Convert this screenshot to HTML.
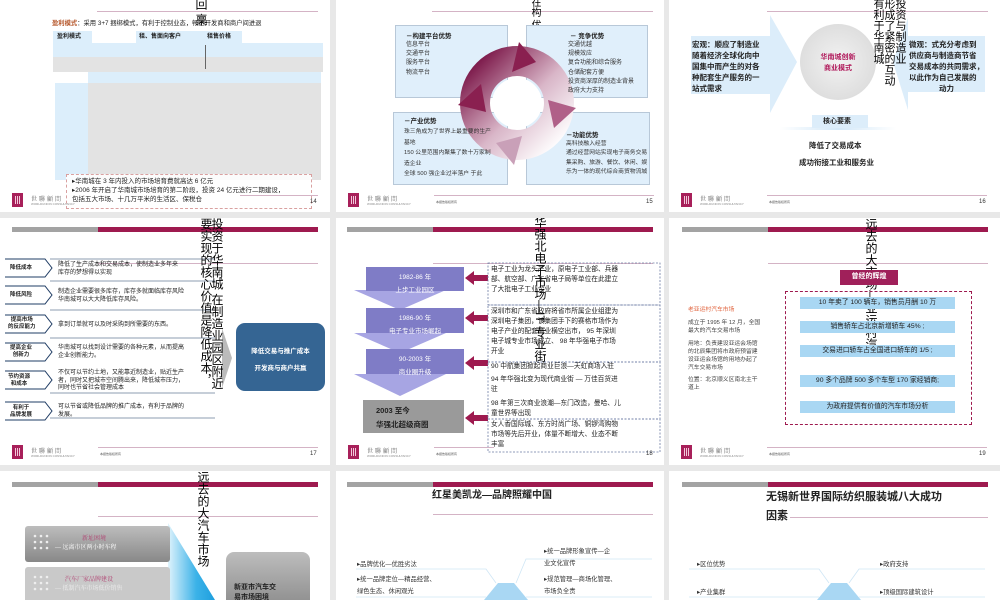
<!DOCTYPE html>
<html><head><meta charset="utf-8">
<style>
*{margin:0;padding:0;box-sizing:border-box}
body{width:1000px;height:600px;overflow:hidden;background:#e8e8e8;position:relative;font-family:"Liberation Sans","Noto Sans CJK SC",sans-serif;color:#222}
.c{position:absolute;background:#fff;overflow:hidden}
.c div,.c span,.c svg{position:absolute}
.gb{height:5px;background:#a3a3a3}
.mb{height:5px;background:#9e1a4f}
.tl{height:1px;background:#d4b3c5}
.ft{left:0;width:330px;height:20px}
.ft .lg{left:12px;top:-2px;width:11px;height:14px;background:#a8205a}
.ft .lg i{position:absolute;top:3px;width:1px;height:8px;background:#f3c9db}
.ft .nm{left:31px;top:-1px;font-size:6px;color:#666;letter-spacing:2px;font-family:"Liberation Serif","Noto Serif CJK SC",serif}
.ft .sb{left:31px;top:7px;font-size:3px;color:#888;white-space:nowrap}
.ft .ln{left:98px;top:0;width:220px;height:1px;background:#d4b3c5}
.ft .cp{left:100px;top:5px;font-size:3px;color:#555;white-space:nowrap}
.ft .pg{left:310px;top:4px;font-size:6px;color:#333}
.vt{writing-mode:vertical-rl;font-size:13px;line-height:11px;color:#000;white-space:nowrap}
.t6{font-size:6px;line-height:9px;white-space:nowrap}
.t7{font-size:7px;line-height:10px;white-space:nowrap}
.bx{background:#e0effb;border:1px solid #b8c8d8}
</style></head><body>

<!-- Slide 14 -->
<div class="c" style="left:0;top:0;width:330px;height:212px">
  <div class="tl" style="left:97px;top:11px;width:221px"></div>
  <div class="vt" style="left:195px;top:-2px;font-size:12px">回 稟</div>
  <div class="t6" style="left:52px;top:19px;font-size:6.3px"><b style="color:#b5562a">盈利模式</b>：采用 3+7 捆绑模式，有利于控制业态，畅达开发商和商户间进退</div>
  <div style="left:53px;top:31px;width:39px;height:12px;background:#dceefb"></div>
  <div style="left:136px;top:31px;width:106px;height:12px;background:#dceefb"></div>
  <div class="t6" style="left:57px;top:33px;font-weight:bold">盈利模式</div>
  <div class="t6" style="left:139px;top:33px;font-weight:bold">租、售面向客户</div>
  <div class="t6" style="left:207px;top:33px;font-weight:bold">租售价格</div>
  <div style="left:53px;top:43px;width:270px;height:14px;background:#dceefb"></div>
  <div style="left:53px;top:57px;width:270px;height:15px;background:#e3e3e3"></div>
  <div style="left:88px;top:72px;width:233px;height:11px;background:#dceefb"></div>
  <div style="left:55px;top:83px;width:33px;height:97px;background:#dceefb"></div>
  <div style="left:88px;top:83px;width:233px;height:97px;background:#e3e3e3"></div>
  <div style="left:205px;top:45px;width:1px;height:24px;background:#666"></div>
  <div style="left:66px;top:174px;width:246px;height:35px;border:1px dashed #d9a0a0;background:rgba(255,255,255,.85)"></div>
  <div class="t6" style="left:72px;top:177px;font-size:6.5px">▸华南城在 3 年内投入的市场培育费就高达 6 亿元</div>
  <div class="t6" style="left:72px;top:186px;font-size:6.5px">▸2006 年开启了华南城市场培育的第二阶段，投资 24 亿元进行二期建设，</div>
  <div class="t6" style="left:72px;top:195px;font-size:6.5px">包括五大市场、十几万平米的生活区、保税仓</div>
  <div class="ft" style="top:195px"><div class="lg"><i style="left:3px"></i><i style="left:5px"></i><i style="left:7px"></i></div><div class="nm">世聯顧問</div><div class="sb">WORLDUNION CONSULTANCY</div><div class="ln" style="left:240px;width:78px"></div><div class="pg">14</div></div>
</div>

<!-- Slide 15 -->
<div class="c" style="left:336px;top:0;width:328px;height:212px">
  <div class="tl" style="left:96px;top:11px;width:221px"></div>
  <div class="vt" style="left:194px;top:-3px;font-size:10px;line-height:9px">在构 优势</div>
  <div class="bx" style="left:59px;top:25px;width:113px;height:73px"></div>
  <div class="bx" style="left:190px;top:25px;width:122px;height:73px"></div>
  <div class="bx" style="left:57px;top:112px;width:115px;height:73px"></div>
  <div class="bx" style="left:190px;top:112px;width:124px;height:73px"></div>
  <svg width="328" height="212" style="left:0;top:0">
    <defs><linearGradient id="g1" x1="0" y1="0" x2="1" y2="1"><stop offset="0" stop-color="#7a1547"/><stop offset=".55" stop-color="#d9b6c8"/><stop offset="1" stop-color="#ffffff"/></linearGradient></defs>
    <circle cx="181" cy="103" r="42" fill="none" stroke="url(#g1)" stroke-width="30"/>
    <polygon points="183,42 200,62 176,72" fill="#8a2050"/>
    <polygon points="240,108 218,128 212,100" fill="#b06088"/>
    <polygon points="178,165 160,143 186,136" fill="#c9a0b8"/>
    <polygon points="122,105 145,84 150,112" fill="#8a2050"/>
    <circle cx="181" cy="103" r="25" fill="#fff"/>
  </svg>
  <div class="t6" style="left:70px;top:32px;font-weight:bold;font-size:6.5px">－构建平台优势</div>
  <div class="t6" style="left:70px;top:41px;line-height:9.2px;color:#333">信息平台<br>交通平台<br>服务平台<br>物流平台</div>
  <div class="t6" style="left:234px;top:32px;font-weight:bold;font-size:6.5px">－ 竞争优势</div>
  <div class="t6" style="left:232px;top:41px;line-height:9.2px;color:#333">交通优越<br>规模效应<br>复合功能和综合服务<br>仓储配套方便<br>投资商深厚的制造业背景<br>政府大力支持</div>
  <div class="t6" style="left:68px;top:117px;font-weight:bold;font-size:6.5px">－产业优势</div>
  <div class="t6" style="left:68px;top:127px;line-height:10.5px;color:#333;font-size:5.8px">珠三角成为了世界上最重要的生产<br>基地<br>150 公里范围内聚集了数十万家制<br>造企业<br>全球 500 强企业过半落户 于此</div>
  <div class="t6" style="left:230px;top:131px;font-weight:bold;font-size:6.5px">－功能优势</div>
  <div class="t6" style="left:230px;top:140px;line-height:9.3px;color:#333;font-size:5.8px">高科技融入经营<br>通过经营网站实现电子商务交易<br>集采购、旅游、餐饮、休闲、娱<br>乐为一体的现代综合商贸物流城</div>
  <div class="ft" style="top:195px"><div class="lg"><i style="left:3px"></i><i style="left:5px"></i><i style="left:7px"></i></div><div class="nm">世聯顧問</div><div class="sb">WORLDUNION CONSULTANCY</div><div class="ln"></div><div class="cp">本报告版权所有</div><div class="pg">15</div></div>
</div>

<!-- Slide 16 -->
<div class="c" style="left:669px;top:0;width:331px;height:212px">
  <div class="tl" style="left:98px;top:11px;width:221px"></div>
  <svg width="331" height="212" style="left:0;top:0">
    <polygon points="22,36 101,36 101,15 128,62 101,113 101,94 22,94" fill="#dcedfa"/>
    <polygon points="316,36 239,36 239,18 224,62 239,110 239,92 316,92" fill="#dcedfa"/>
    <defs><radialGradient id="g2"><stop offset="0" stop-color="#f2f2f2"/><stop offset="1" stop-color="#dedede"/></radialGradient>
    <linearGradient id="g3" x1="0" x2="1"><stop offset="0" stop-color="#fff"/><stop offset=".5" stop-color="#d3e8f8"/><stop offset="1" stop-color="#fff"/></linearGradient></defs>
    <circle cx="169" cy="62" r="38" fill="url(#g2)"/>
    <rect x="111" y="127" width="116" height="3" fill="url(#g3)"/>
  </svg>
  <div class="t7" style="left:23px;top:39px;font-weight:bold;font-size:7.5px;line-height:11px">宏观：顺应了制造业<br>随着经济全球化向中<br>国集中而产生的对各<br>种配套生产服务的一<br>站式需求</div>
  <div class="t7" style="left:140px;top:52px;font-weight:bold;color:#b0185a;text-align:center;width:58px;line-height:11px">华南城创新<br>商业模式</div>
  <div class="vt" style="left:203px;top:-2px;font-size:11px;line-height:11px">投资与制造业<br>形成了紧密的互动<br>有利于华南城</div>
  <div class="t7" style="left:240px;top:39px;font-weight:bold;font-size:7.5px;line-height:11px">微观：式充分考虑到<br>供应商与制造商节省<br>交易成本的共同需求，<br>以此作为自己发展的<br><span style="position:static;padding-left:30px">动力</span></div>
  <div style="left:143px;top:115px;width:56px;height:13px;background:#dcedfa"></div>
  <div class="t7" style="left:154px;top:117px;font-weight:bold">核心要素</div>
  <div class="t7" style="left:140px;top:141px;font-weight:bold;font-size:7.5px">降低了交易成本</div>
  <div class="t7" style="left:130px;top:158px;font-weight:bold;font-size:7.5px">成功衔接工业和服务业</div>
  <div class="ft" style="top:195px"><div class="lg"><i style="left:3px"></i><i style="left:5px"></i><i style="left:7px"></i></div><div class="nm">世聯顧問</div><div class="sb">WORLDUNION CONSULTANCY</div><div class="ln"></div><div class="cp">本报告版权所有</div><div class="pg">16</div></div>
</div>

<!-- Slide 17 -->
<div class="c" style="left:0;top:218px;width:330px;height:247px">
  <div class="gb" style="left:12px;top:9px;width:86px"></div><div class="mb" style="left:98px;top:9px;width:220px"></div>
  <div class="tl" style="left:98px;top:45px;width:220px"></div>
  <svg width="330" height="247" style="left:0;top:0" fill="none" stroke="#1f3c64" stroke-width="1">
    <path d="M5 41 H45 L52 50 L45 59 H5"/><path d="M50 41 H215" stroke-width=".6"/>
    <path d="M5 68 H45 L52 77 L45 86 H5"/><path d="M50 63 H215" stroke-width=".6"/>
    <path d="M5 97 H45 L52 106 L45 115 H5"/><path d="M50 92 H215" stroke-width=".6"/>
    <path d="M5 125 H45 L52 134 L45 143 H5"/><path d="M50 120 H215" stroke-width=".6"/>
    <path d="M5 153 H45 L52 162 L45 171 H5"/><path d="M50 175 H215" stroke-width=".6"/>
    <path d="M5 184 H45 L52 193 L45 202 H5"/><path d="M50 200 H215" stroke-width=".6"/>
    <path d="M222 110 L232 140 L222 170 Z" fill="#bbb" stroke="none"/>
  </svg>
  <div class="t6" style="left:10px;top:46px;font-weight:bold;font-size:5.5px">降低成本</div>
  <div class="t6" style="left:10px;top:73px;font-weight:bold;font-size:5.5px">降低风险</div>
  <div class="t6" style="left:8px;top:99px;font-weight:bold;font-size:5.5px;line-height:7px;text-align:center">提高市场<br>的反应能力</div>
  <div class="t6" style="left:10px;top:127px;font-weight:bold;font-size:5.5px;line-height:7px;text-align:center">提高企业<br>创新力</div>
  <div class="t6" style="left:8px;top:156px;font-weight:bold;font-size:5.5px;line-height:7px;text-align:center">节约资源<br>和成本</div>
  <div class="t6" style="left:10px;top:187px;font-weight:bold;font-size:5.5px;line-height:7px;text-align:center">有利于<br>品牌发展</div>
  <div class="t6" style="left:58px;top:44px;font-size:6px;line-height:7.5px">降低了生产成本和交易成本，使制造业多年来<br>库存的梦想得以实现</div>
  <div class="t6" style="left:58px;top:71px;font-size:6px;line-height:7.5px">制造企业需要很多库存，库存多就面临库存风险<br>华南城可以大大降低库存风险。</div>
  <div class="t6" style="left:58px;top:103px;font-size:6px">拿到订单就可以及时采购到所需要的东西。</div>
  <div class="t6" style="left:58px;top:127px;font-size:6px;line-height:7.5px">华南城可以找到设计需要的各种元素，从而提高<br>企业创新能力。</div>
  <div class="t6" style="left:58px;top:152px;font-size:6px;line-height:7.5px">不仅可以节约土地，又能靠近制造业，贴近生产<br>者，同时又把城市空间腾出来，降低城市压力，<br>同时也节省社会管理成本</div>
  <div class="t6" style="left:58px;top:186px;font-size:6px;line-height:7.5px">可以节省或降低品牌的推广成本，有利于品牌的<br>发展。</div>
  <div class="vt" style="left:200px;top:0px;font-size:12px;line-height:11px">投资于华南城 在制造业园区附近<br>要实现的核心价值是降低成本，</div>
  <div style="left:236px;top:105px;width:89px;height:68px;background:#356593;border-radius:9px"></div>
  <div class="t7" style="left:236px;top:129px;width:89px;text-align:center;color:#fff;font-weight:bold;font-size:6.5px">降低交易与推广成本</div>
  <div class="t7" style="left:236px;top:146px;width:89px;text-align:center;color:#fff;font-weight:bold;font-size:6.5px">开发商与商户共赢</div>
  <div class="ft" style="top:229px"><div class="lg"><i style="left:3px"></i><i style="left:5px"></i><i style="left:7px"></i></div><div class="nm">世聯顧問</div><div class="sb">WORLDUNION CONSULTANCY</div><div class="ln"></div><div class="cp">本报告版权所有</div><div class="pg">17</div></div>
</div>

<!-- Slide 18 -->
<div class="c" style="left:336px;top:218px;width:328px;height:247px">
  <div class="gb" style="left:11px;top:9px;width:86px"></div><div class="mb" style="left:97px;top:9px;width:220px"></div>
  <div class="tl" style="left:97px;top:45px;width:220px"></div>
  <svg width="328" height="247" style="left:0;top:0">
    <polygon points="18,72 110,72 64,92" fill="#a7a5e3"/>
    <polygon points="18,115 110,115 64,135" fill="#a7a5e3"/>
    <polygon points="18,156 110,156 64,178" fill="#a7a5e3"/>
    <rect x="30" y="49" width="98" height="24" fill="#7f7cc6"/>
    <rect x="30" y="90" width="98" height="25" fill="#7f7cc6"/>
    <rect x="30" y="131" width="98" height="25" fill="#7f7cc6"/>
    <rect x="27" y="182" width="101" height="33" fill="#9a9a9a"/>
    <g fill="#9e1a4f">
      <polygon points="129,60 138,53 138,57 152,57 152,63 138,63 138,67"/>
      <polygon points="129,100 138,93 138,97 152,97 152,103 138,103 138,107"/>
      <polygon points="129,145 138,138 138,142 152,142 152,148 138,148 138,152"/>
      <polygon points="129,200 138,193 138,197 152,197 152,203 138,203 138,207"/>
    </g>
    <g fill="none" stroke="#6b7ba3" stroke-dasharray="2,1.5" stroke-width=".8">
      <rect x="152" y="45" width="172" height="42"/>
      <rect x="152" y="87" width="172" height="57"/>
      <rect x="152" y="144" width="172" height="57"/>
      <rect x="152" y="201" width="172" height="33"/>
    </g>
  </svg>
  <div class="t7" style="left:30px;top:53px;width:98px;text-align:center;color:#fff;font-size:6.5px;line-height:13px">1982-86 年<br>上步工业园区</div>
  <div class="t7" style="left:30px;top:94px;width:98px;text-align:center;color:#fff;font-size:6.5px;line-height:13px">1986-90 年<br>电子专业市场崛起</div>
  <div class="t7" style="left:30px;top:135px;width:98px;text-align:center;color:#fff;font-size:6.5px;line-height:13px">90-2003 年<br>商业圈升级</div>
  <div class="t7" style="left:40px;top:186px;font-weight:bold;font-size:7.5px;line-height:14px">2003 至今<br>华强北超级商圈</div>
  <div class="t7" style="left:155px;top:47px;font-size:6.7px;line-height:10px">电子工业为龙头产业，原电子工业部、兵器<br>部、航空部、广东省电子局等单位在此建立<br>了大批电子工业企业</div>
  <div class="t7" style="left:155px;top:89px;font-size:6.7px;line-height:10px">深圳市和广东省政府将省市所属企业组建为<br>深圳电子集团，该集团手下的赛格市场作为<br>电子产业的配套商业横空出市， 95 年深圳<br>电子城专业市场成立、 98 年华强电子市场<br>开业</div>
  <div class="t7" style="left:155px;top:144px;font-size:6.7px;line-height:10px">90 中航集团掀起商业巨浪—天虹商场入驻</div>
  <div class="t7" style="left:155px;top:157px;font-size:6.7px;line-height:10px">94 年华强北变为现代商业街 — 万佳百货进<br>驻</div>
  <div class="t7" style="left:155px;top:181px;font-size:6.7px;line-height:10px">98 年第三次商业浪潮—东门改造，曼哈、儿<br>童世界等出现</div>
  <div class="t7" style="left:155px;top:202px;font-size:6.7px;line-height:10px">女人香国际城、东方时尚广场、铜锣湾购物<br>市场等先后开业，体量不断增大、业态不断<br>丰富</div>
  <div class="vt" style="left:198px;top:-2px;font-size:12px">华强北电子市场—IT 专业街</div>
  <div class="ft" style="top:229px"><div class="lg"><i style="left:3px"></i><i style="left:5px"></i><i style="left:7px"></i></div><div class="nm">世聯顧問</div><div class="sb">WORLDUNION CONSULTANCY</div><div class="ln" style="width:60px"></div><div class="cp">本报告版权所有</div><div class="pg">18</div></div>
</div>

<!-- Slide 19 -->
<div class="c" style="left:669px;top:218px;width:331px;height:247px">
  <div class="gb" style="left:13px;top:9px;width:86px"></div><div class="mb" style="left:99px;top:9px;width:220px"></div>
  <div class="tl" style="left:99px;top:45px;width:220px"></div>
  <div class="vt" style="left:196px;top:0px;font-size:12px">远去的大市场—亚运村汽</div>
  <div style="left:171px;top:52px;width:58px;height:15px;background:#a0205a"></div>
  <div class="t7" style="left:171px;top:54px;width:58px;text-align:center;color:#fff;font-weight:bold">曾经的辉煌</div>
  <div style="left:116px;top:73px;width:187px;height:134px;border:1px dashed #9e1a4f"></div>
  <div style="left:131px;top:79px;width:155px;height:12px;background:#a9d7f3"></div>
  <div style="left:131px;top:103px;width:155px;height:12px;background:#a9d7f3"></div>
  <div style="left:131px;top:127px;width:155px;height:12px;background:#a9d7f3"></div>
  <div style="left:131px;top:157px;width:155px;height:12px;background:#a9d7f3"></div>
  <div style="left:131px;top:183px;width:155px;height:12px;background:#a9d7f3"></div>
  <div class="t7" style="left:131px;top:80px;width:155px;text-align:center;font-size:6.8px">10 年卖了 100 辆车，销售员月酬 10 万</div>
  <div class="t7" style="left:131px;top:104px;width:155px;text-align:center;font-size:6.8px">销售轿车占北京新增轿车 45% ;</div>
  <div class="t7" style="left:131px;top:128px;width:155px;text-align:center;font-size:6.8px">交易进口轿车占全国进口轿车的 1/5 ;</div>
  <div class="t7" style="left:131px;top:158px;width:155px;text-align:center;font-size:6.8px">90 多个品牌 500 多个车型 170 家经销商;</div>
  <div class="t7" style="left:131px;top:184px;width:155px;text-align:center;font-size:6.8px">为政府提供有价值的汽车市场分析</div>
  <div class="t6" style="left:19px;top:88px;color:#e0603a;font-size:5.8px">老亚运村汽车市场</div>
  <div class="t6" style="left:19px;top:101px;color:#444;font-size:5.8px;line-height:8px">成立于 1995 年 12 月，全国<br>最大的汽车交易市场</div>
  <div class="t6" style="left:19px;top:122px;color:#444;font-size:5.8px;line-height:8px">用地：负责建设亚运会场馆<br>的北辰集团将市政府预留建<br>设亚运会场馆的用地办起了<br>汽车交易市场</div>
  <div class="t6" style="left:19px;top:158px;color:#444;font-size:5.8px;line-height:8px">位置：北京顺义区南北主干<br>道上</div>
  <div class="ft" style="top:229px"><div class="lg"><i style="left:3px"></i><i style="left:5px"></i><i style="left:7px"></i></div><div class="nm">世聯顧問</div><div class="sb">WORLDUNION CONSULTANCY</div><div class="ln"></div><div class="cp">本报告版权所有</div><div class="pg">19</div></div>
</div>

<!-- Slide 20 -->
<div class="c" style="left:0;top:471px;width:330px;height:129px">
  <div class="gb" style="left:12px;top:11px;width:86px"></div><div class="mb" style="left:98px;top:11px;width:220px"></div>
  <div class="tl" style="left:98px;top:45px;width:220px"></div>
  <svg width="330" height="129" style="left:0;top:0">
    <defs><linearGradient id="g4" x1="0" x2="1"><stop offset="0" stop-color="#dff3fc"/><stop offset=".6" stop-color="#3bb2e8"/><stop offset="1" stop-color="#1e9fde"/></linearGradient>
    <linearGradient id="g5" x1="0" y1="0" x2="0" y2="1"><stop offset="0" stop-color="#bdbdbd"/><stop offset="1" stop-color="#888"/></linearGradient></defs>
    <polygon points="168,52 215,129 168,129" fill="url(#g4)"/>
    <rect x="25" y="55" width="145" height="36" rx="3" fill="url(#g5)"/>
    <rect x="25" y="96" width="145" height="40" rx="3" fill="#c9c9c9"/>
    <rect x="226" y="81" width="84" height="60" rx="8" fill="url(#g5)"/>
    <g fill="#eee"><circle cx="35" cy="65" r="1.3"/><circle cx="41" cy="65" r="1.3"/><circle cx="47" cy="65" r="1.3"/><circle cx="35" cy="71" r="1.3"/><circle cx="41" cy="71" r="1.3"/><circle cx="47" cy="71" r="1.3"/><circle cx="35" cy="77" r="1.3"/><circle cx="41" cy="77" r="1.3"/><circle cx="47" cy="77" r="1.3"/>
    <circle cx="35" cy="106" r="1.3"/><circle cx="41" cy="106" r="1.3"/><circle cx="47" cy="106" r="1.3"/><circle cx="35" cy="112" r="1.3"/><circle cx="41" cy="112" r="1.3"/><circle cx="47" cy="112" r="1.3"/><circle cx="35" cy="118" r="1.3"/><circle cx="41" cy="118" r="1.3"/><circle cx="47" cy="118" r="1.3"/></g>
  </svg>
  <div class="t6" style="left:82px;top:64px;color:#b04070;font-family:'Liberation Serif','Noto Serif CJK SC',serif">新址困境</div>
  <div class="t6" style="left:55px;top:73px;color:#fff;font-family:'Liberation Serif','Noto Serif CJK SC',serif">— 远离市区两小时车程</div>
  <div class="t6" style="left:65px;top:105px;color:#b04070;font-family:'Liberation Serif','Noto Serif CJK SC',serif">汽车厂家品牌建设</div>
  <div class="t6" style="left:55px;top:114px;color:#eee;font-family:'Liberation Serif','Noto Serif CJK SC',serif">— 抵制汽车市场低价销售</div>
  <div class="t7" style="left:234px;top:112px;font-weight:bold;font-size:7px;line-height:10px">新亚市汽车交<br>易市场困境</div>
  <div class="vt" style="left:197px;top:0px;font-size:12px">远去的大汽车市场</div>
</div>

<!-- Slide 21 -->
<div class="c" style="left:336px;top:471px;width:328px;height:129px">
  <div class="gb" style="left:11px;top:11px;width:86px"></div><div class="mb" style="left:97px;top:11px;width:220px"></div>
  <div class="tl" style="left:97px;top:43px;width:220px"></div>
  <div class="t7" style="left:96px;top:19px;font-weight:bold;font-size:10px;line-height:12px">红星美凯龙—品牌照耀中国</div>
  <svg width="328" height="129" style="left:0;top:0">
    <g stroke="#cfe6f5" stroke-width=".8" fill="none"><path d="M20 98 H150 L160 112"/><path d="M316 88 H190 L180 112"/><path d="M20 126 H150"/><path d="M316 126 H190"/></g>
    <polygon points="148,129 162,112 178,112 192,129" fill="#a9d7f3"/>
  </svg>
  <div class="t6" style="left:208px;top:75px;font-size:6.3px;line-height:12px;color:#333">▸统一品牌形象宣传—企<br>业文化宣传</div>
  <div class="t6" style="left:21px;top:89px;font-size:6.3px;color:#333">▸品牌优化—优胜劣汰</div>
  <div class="t6" style="left:208px;top:103px;font-size:6.3px;line-height:12px;color:#333">▸规范管理—商场化管理、<br>市场负全责</div>
  <div class="t6" style="left:21px;top:103px;font-size:6.3px;line-height:12px;color:#333">▸统一品牌定位—精品经营、<br>绿色生态、休闲观光</div>
</div>

<!-- Slide 22 -->
<div class="c" style="left:669px;top:471px;width:331px;height:129px">
  <div class="gb" style="left:13px;top:11px;width:86px"></div><div class="mb" style="left:99px;top:11px;width:220px"></div>
  <div class="tl" style="left:121px;top:46px;width:198px"></div>
  <div class="t7" style="left:97px;top:17px;font-weight:bold;font-size:11px;line-height:19px">无锡新世界国际纺织服装城八大成功<br>因素</div>
  <svg width="331" height="129" style="left:0;top:0">
    <g stroke="#cfe6f5" stroke-width=".8" fill="none"><path d="M20 98 H150 L160 112"/><path d="M316 98 H190 L180 112"/><path d="M20 126 H150"/><path d="M316 126 H190"/></g>
    <polygon points="148,129 162,112 178,112 192,129" fill="#a9d7f3"/>
  </svg>
  <div class="t6" style="left:28px;top:89px;font-size:6.3px;color:#333">▸区位优势</div>
  <div class="t6" style="left:211px;top:89px;font-size:6.3px;color:#333">▸政府支持</div>
  <div class="t6" style="left:28px;top:117px;font-size:6.3px;color:#333">▸产业集群</div>
  <div class="t6" style="left:211px;top:117px;font-size:6.3px;color:#333">▸顶级国际建筑设计</div>
</div>

</body></html>
